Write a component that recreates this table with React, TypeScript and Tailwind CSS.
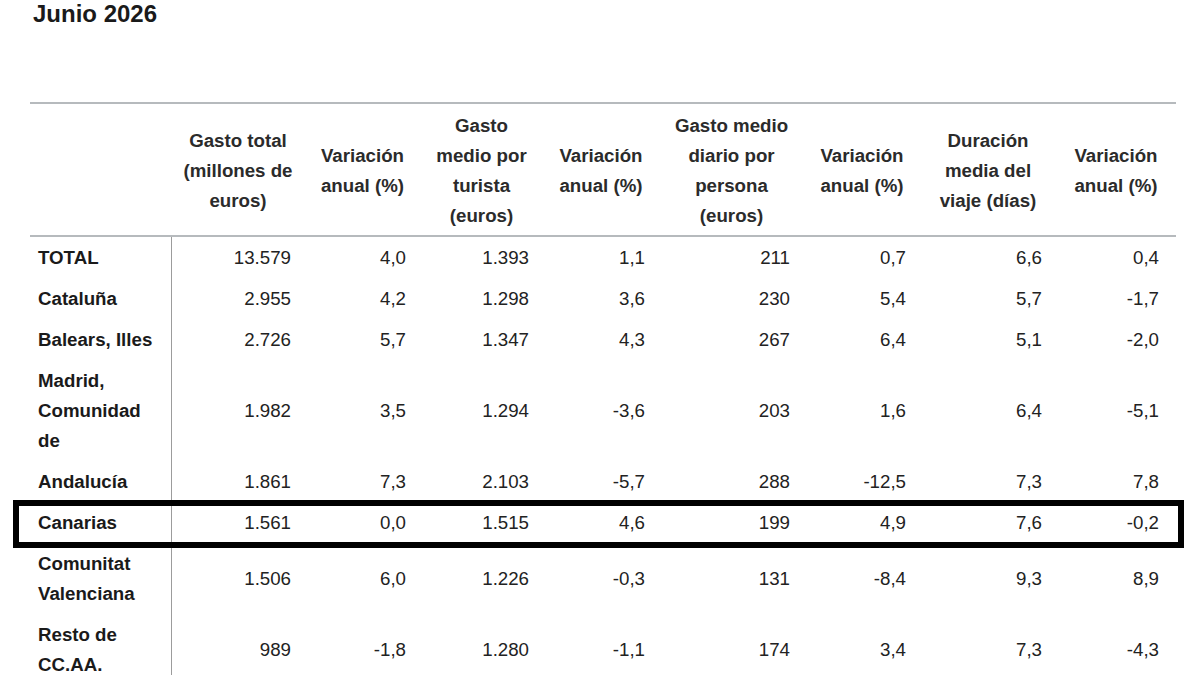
// Tabla de gasto turístico por comunidad autónoma, junio 2026
type Row = {
  label: React.ReactNode;
  values: string[];
};

const headers: React.ReactNode[] = [
  <>Gasto total<br />(millones de<br />euros)</>,
  <>Variación<br />anual (%)</>,
  <>Gasto<br />medio por<br />turista<br />(euros)</>,
  <>Variación<br />anual (%)</>,
  <>Gasto medio<br />diario por<br />persona<br />(euros)</>,
  <>Variación<br />anual (%)</>,
  <>Duración<br />media del<br />viaje (días)</>,
  <>Variación<br />anual (%)</>,
];

const rows: Row[] = [
  { label: 'TOTAL', values: ['13.579', '4,0', '1.393', '1,1', '211', '0,7', '6,6', '0,4'] },
  { label: 'Cataluña', values: ['2.955', '4,2', '1.298', '3,6', '230', '5,4', '5,7', '-1,7'] },
  { label: 'Balears, Illes', values: ['2.726', '5,7', '1.347', '4,3', '267', '6,4', '5,1', '-2,0'] },
  { label: <>Madrid,<br />Comunidad<br />de</>, values: ['1.982', '3,5', '1.294', '-3,6', '203', '1,6', '6,4', '-5,1'] },
  { label: 'Andalucía', values: ['1.861', '7,3', '2.103', '-5,7', '288', '-12,5', '7,3', '7,8'] },
  { label: 'Canarias', values: ['1.561', '0,0', '1.515', '4,6', '199', '4,9', '7,6', '-0,2'] },
  { label: <>Comunitat<br />Valenciana</>, values: ['1.506', '6,0', '1.226', '-0,3', '131', '-8,4', '9,3', '8,9'] },
  { label: <>Resto de<br />CC.AA.</>, values: ['989', '-1,8', '1.280', '-1,1', '174', '3,4', '7,3', '-4,3'] },
];

// column widths in px, first one is the region label
const colWidths = ['w-[141px]', 'w-[134px]', 'w-[115px]', 'w-[123px]', 'w-[116px]', 'w-[145px]', 'w-[116px]', 'w-[136px]', 'w-[120px]'];

export default function App() {
  return (
    <div
      className="relative w-[1200px] h-[675px] overflow-hidden bg-white text-[#222]"
      style={{ fontFamily: '"Liberation Sans", Arial, sans-serif' }}
    >
      <h1 className="pl-[33px] text-[24px] leading-[28px] font-bold text-[#1a1a1a]">Junio 2026</h1>

      <div className="pl-[30px] pt-[74px]">
        <table className="table-fixed border-collapse w-[1146px] text-[18.7px] leading-[30px]">
          <colgroup>
            {colWidths.map((w, i) => (
              <col key={i} className={w} />
            ))}
          </colgroup>
          <thead>
            <tr className="border-t-2 border-b-2 border-[#b6babd]">
              <th className="h-[133px]"></th>
              {headers.map((h, i) => (
                <th key={i} className="h-[133px] p-0 pt-[2px] align-middle text-center font-bold text-[#2b2b2b]">
                  {h}
                </th>
              ))}
            </tr>
          </thead>
          <tbody>
            {rows.map((row, r) => (
              <tr key={r}>
                <td className="border-r border-[#9c9c9c] py-[5.5px] pl-[8px] pr-[8px] align-middle font-bold text-[#1a1a1a]">
                  {row.label}
                </td>
                {row.values.map((v, i) => (
                  <td
                    key={i}
                    className={`py-[5.5px] align-middle text-right ${i === 7 ? 'pr-[17px]' : 'pr-[14px]'}`}
                  >
                    {v}
                  </td>
                ))}
              </tr>
            ))}
          </tbody>
        </table>
      </div>

      {/* recuadro que destaca Canarias */}
      <div className="absolute left-[13px] top-[500px] w-[1171px] h-[48px] border-[6px] border-black pointer-events-none"></div>
    </div>
  );
}
